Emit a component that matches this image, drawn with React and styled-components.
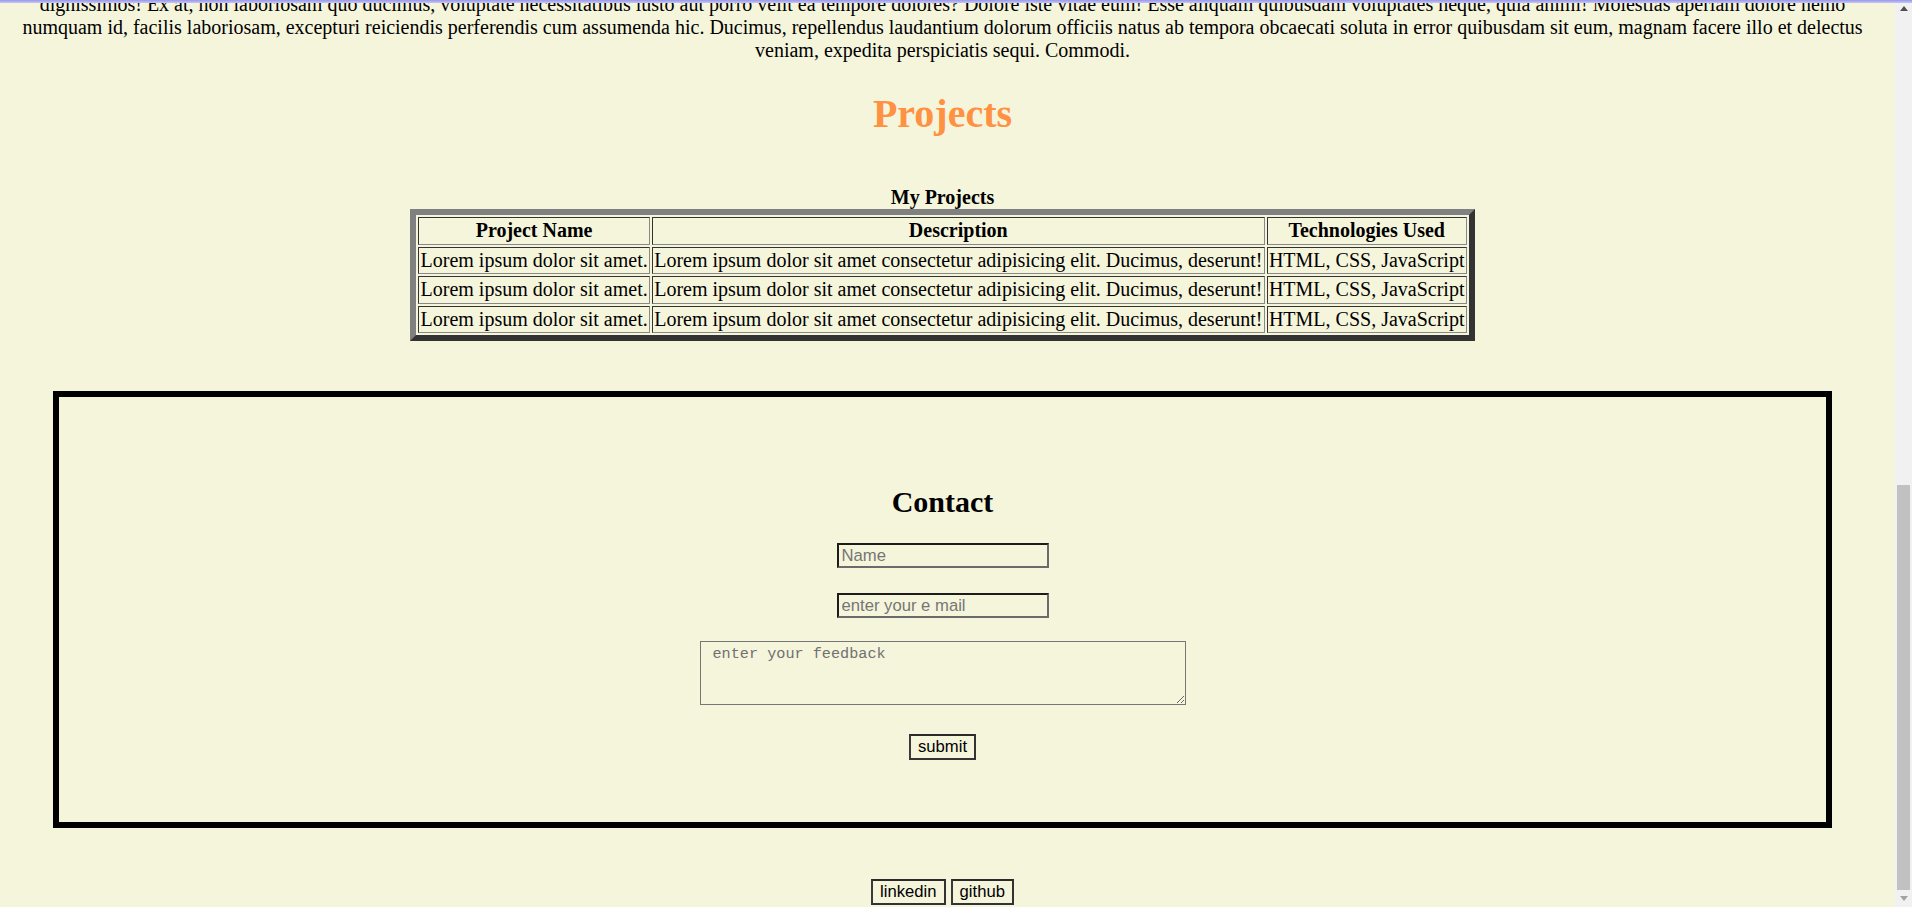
import React from "react";
import styled, { createGlobalStyle } from "styled-components";

const GlobalStyle = createGlobalStyle`
  html, body {
    margin: 0;
    height: 100%;
    overflow: hidden;
  }
  body {
    background: #f5f5dc;
    color: #000;
    font-family: "Liberation Serif", "Times New Roman", serif;
    font-size: 20px;
  }
`;

const Window = styled.div`
  display: flex;
  height: 100vh;
`;

// content sits at the bottom, the top of the page is scrolled out of view
const Page = styled.main`
  flex: 1;
  display: flex;
  flex-direction: column;
  justify-content: flex-end;
  overflow: hidden;
  padding-right: 10px;
  > * {
    flex-shrink: 0;
  }
`;

const TopEdge = styled.div`
  position: fixed;
  top: 0;
  left: 0;
  right: 0;
  height: 3px;
  background: linear-gradient(#9797ee, #c6c6f3);
`;

const Intro = styled.p`
  margin: 0;
  text-align: center;
  line-height: normal;
`;

const SectionTitle = styled.h1`
  margin: 28px 0 49px;
  text-align: center;
  font-size: 40px;
  line-height: normal;
  color: #ff9142;
`;

const ProjectTable = styled.table`
  margin: 0 auto 50px;
  border-collapse: separate;
  border-spacing: 2.5px;
  border: 6px solid;
  border-color: #808080 #333 #333 #808080;
  font-size: 20px;
  line-height: normal;
`;

const Caption = styled.caption`
  font-weight: bold;
`;

const HeadCell = styled.th`
  border: 1px solid;
  border-color: #333 #888 #888 #333;
  padding: 1.25px;
  white-space: nowrap;
`;

const Cell = styled.td`
  border: 1px solid;
  border-color: #333 #888 #888 #333;
  padding: 1.25px;
  white-space: nowrap;
`;

const ContactBox = styled.section`
  margin: 0 53px 51px;
  border: 6px solid #000;
  padding: 88px 0 62px;
  display: flex;
  flex-direction: column;
  align-items: center;
`;

const ContactTitle = styled.h2`
  margin: 0 0 24px;
  font-size: 30px;
  line-height: normal;
`;

const Field = styled.input`
  box-sizing: border-box;
  width: 212px;
  height: 25px;
  margin: 0 0 ${(p) => p.$gap}px;
  padding: 1px 3px;
  border: 2px solid;
  border-color: #1c1c1c #6b6b6b #6b6b6b #1c1c1c;
  background: transparent;
  font: 16.67px "Liberation Sans", Arial, sans-serif;
  &::placeholder {
    color: #757575;
  }
`;

const Feedback = styled.textarea`
  box-sizing: border-box;
  width: 486px;
  height: 64px;
  margin: 0 0 29px;
  padding: 3px 2px 2px 12px;
  border: 1px solid #767676;
  background: transparent;
  font: 15.2px "Liberation Mono", monospace;
  &::placeholder {
    color: #707070;
  }
`;

const PlainButton = styled.button`
  box-sizing: border-box;
  height: 26px;
  padding: 0 7px;
  border: 2.5px solid;
  border-color: #2a2a2a #333 #333 #3a3a3a;
  background: transparent;
  color: #000;
  font: 16.67px "Liberation Sans", Arial, sans-serif;
`;

const Footer = styled.footer`
  display: flex;
  justify-content: center;
  gap: 5px;
  padding-bottom: 2px;
`;

const Scrollbar = styled.div`
  width: 17px;
  background: #f1f1f1;
  display: flex;
  flex-direction: column;
`;

const ArrowButton = styled.div`
  height: 17px;
  display: flex;
  align-items: center;
  justify-content: center;
  color: ${(p) => (p.$dim ? "#a3a3a3" : "#505050")};
`;

const Track = styled.div`
  flex: 1;
  display: flex;
  flex-direction: column;
  justify-content: flex-end;
  padding: 0 2px;
`;

const Thumb = styled.div`
  height: 405px;
  background: #c1c1c1;
`;

const Arrow = ({ down }) => (
  <svg width="8" height="5" viewBox="0 0 8 5">
    <polygon
      points={down ? "0,0 8,0 4,5" : "0,5 8,5 4,0"}
      fill="currentColor"
    />
  </svg>
);

const projects = [1, 2, 3].map((id) => ({
  id,
  name: "Lorem ipsum dolor sit amet.",
  description:
    "Lorem ipsum dolor sit amet consectetur adipisicing elit. Ducimus, deserunt!",
  tech: "HTML, CSS, JavaScript",
}));

export default function App() {
  return (
    <>
      <GlobalStyle />
      <TopEdge />
      <Window>
        <Page>
          <Intro>
            dignissimos! Ex at, non laboriosam quo ducimus, voluptate
            necessitatibus iusto aut porro velit ea tempore dolores? Dolore
            iste vitae eum! Esse aliquam quibusdam voluptates neque, quia
            animi! Molestias aperiam dolore nemo numquam id, facilis
            laboriosam, excepturi reiciendis perferendis cum assumenda hic.
            Ducimus, repellendus laudantium dolorum officiis natus ab tempora
            obcaecati soluta in error quibusdam sit eum, magnam facere illo et
            delectus veniam, expedita perspiciatis sequi. Commodi.
          </Intro>

          <SectionTitle>Projects</SectionTitle>

          <ProjectTable>
            <Caption>My Projects</Caption>
            <thead>
              <tr>
                <HeadCell>Project Name</HeadCell>
                <HeadCell>Description</HeadCell>
                <HeadCell>Technologies Used</HeadCell>
              </tr>
            </thead>
            <tbody>
              {projects.map((p) => (
                <tr key={p.id}>
                  <Cell>{p.name}</Cell>
                  <Cell>{p.description}</Cell>
                  <Cell>{p.tech}</Cell>
                </tr>
              ))}
            </tbody>
          </ProjectTable>

          <ContactBox>
            <ContactTitle>Contact</ContactTitle>
            <Field type="text" placeholder="Name" $gap={25} />
            <Field type="email" placeholder="enter your e mail" $gap={23} />
            <Feedback placeholder="enter your feedback" />
            <PlainButton type="submit">submit</PlainButton>
          </ContactBox>

          <Footer>
            <PlainButton>linkedin</PlainButton>
            <PlainButton>github</PlainButton>
          </Footer>
        </Page>

        <Scrollbar>
          <ArrowButton>
            <Arrow />
          </ArrowButton>
          <Track>
            <Thumb />
          </Track>
          <ArrowButton $dim>
            <Arrow down />
          </ArrowButton>
        </Scrollbar>
      </Window>
    </>
  );
}
